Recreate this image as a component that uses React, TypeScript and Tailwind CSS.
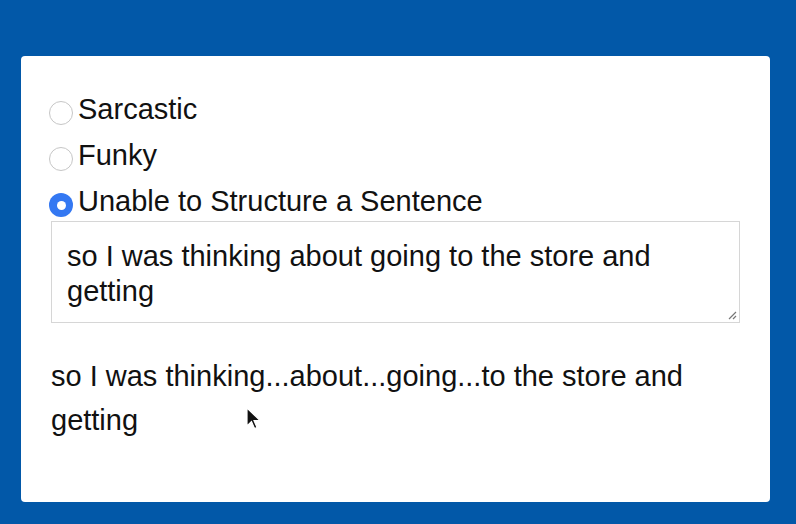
import { useState } from "react";

const options = ["Sarcastic", "Funky", "Unable to Structure a Sentence"];

function Radio({ checked }: { checked: boolean }) {
  if (checked) {
    return (
      <span className="w-[24px] h-[24px] rounded-full bg-[#3478f2] flex items-center justify-center shrink-0">
        <span className="w-[9px] h-[9px] rounded-full bg-white" />
      </span>
    );
  }
  return <span className="w-[24px] h-[24px] rounded-full border-[1.5px] border-[#c6c6c6] bg-white shrink-0" />;
}

export default function App() {
  const [mood] = useState(2);

  return (
    <div className="w-[796px] h-[524px] bg-[#0258a8] pt-[56px] pl-[21px] font-['Liberation_Sans',Arial,sans-serif] text-[#111]">
      <div className="relative w-[749px] h-[446px] bg-white rounded-[4px] pt-[45px] pl-[28px] pr-[30px]">
        <div className="flex flex-col gap-[22px]">
          {options.map((o, i) => (
            <label key={o} className="flex items-center h-[24px] text-[29px] leading-[24px]">
              <Radio checked={i === mood} />
              <span className="ml-[5px] -translate-y-[4px]">{o}</span>
            </label>
          ))}
        </div>
        <div className="relative mt-[4px] ml-[2px] w-[689px] h-[102px] border border-[#d6d6d6] pt-[17px] pl-[15px] text-[29px] leading-[35px]">
          so I was thinking about going to the store and
          <br />
          getting
          <svg className="absolute right-[2px] bottom-[2px]" width="10" height="10" viewBox="0 0 10 10">
            <path d="M9 2 L2 9 M9 6 L6 9" stroke="#777" strokeWidth="1.2" />
          </svg>
        </div>
        <p className="mt-[31px] ml-[2px] text-[29px] leading-[44px]">
          so I was thinking...about...going...to the store and
          <br />
          getting
        </p>
        <svg className="absolute left-[225px] top-[351px]" width="16" height="24" viewBox="0 0 16 24">
          <path d="M1 1 L1 19 L5.5 14.5 L8.5 21.5 L11 20.5 L8 13.5 L14 13.5 Z" fill="#111" stroke="#fff" strokeWidth="1.2" />
        </svg>
      </div>
    </div>
  );
}
